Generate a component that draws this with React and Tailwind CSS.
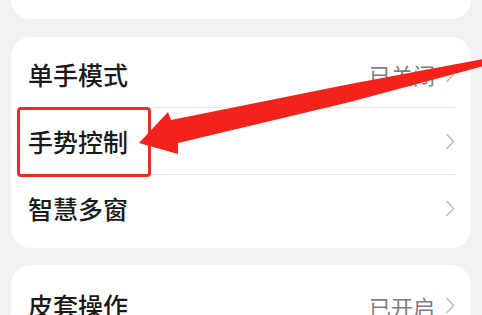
const Chevron = () => (
  <svg width="10" height="17" viewBox="0 0 10 17" fill="none" className="shrink-0">
    <polyline points="2,1.5 8.5,8.5 2,15.5" stroke="#bfbfc1" strokeWidth="1.6" strokeLinecap="round" strokeLinejoin="round" />
  </svg>
)

const Row = ({ label, value, divider }) => (
  <div className="h-[67px] flex items-center pl-[17px] pr-[16px]">
    <div className={"flex-1 h-full flex items-center " + (divider ? "border-b border-[#e6e6e8]" : "")}>
      <span className="flex-1 text-[25px] font-medium text-[#1b1b1b] leading-none">{label}</span>
      {value && <span className="text-[22px] text-[#7e7e7e] leading-none mr-[10px]">{value}</span>}
      <Chevron />
    </div>
  </div>
)

export default function App() {
  return (
    <div
      className="relative w-[482px] h-[315px] overflow-hidden bg-[#f1f2f4] px-[11px]"
      style={{ fontFamily: '"Noto Sans CJK SC", "Noto Sans", sans-serif' }}
    >
      <div className="h-[19px] bg-white rounded-b-[20px]" />

      <div className="mt-[18px] bg-white rounded-[20px] pt-[4px] pb-[6px]">
        <Row label="单手模式" value="已关闭" divider />
        <Row label="手势控制" divider />
        <Row label="智慧多窗" />
      </div>

      <div className="mt-[17px] bg-white rounded-t-[20px] pt-[7px] h-[80px]">
        <Row label="皮套操作" value="已开启" />
      </div>

      {/* annotation box */}
      <div className="absolute left-[17px] top-[107px] w-[134px] h-[70px] border-[3px] border-[#ee2a22] rounded-[4px]" />

      {/* annotation arrow */}
      <svg className="absolute left-0 top-0" width="482" height="315" viewBox="0 0 482 315">
        <polygon
          points="139,143 168,112 171,120 350,84 484,59 484,66 350,102 178,143 178,154"
          fill="#f3231b"
        />
      </svg>
    </div>
  )
}
